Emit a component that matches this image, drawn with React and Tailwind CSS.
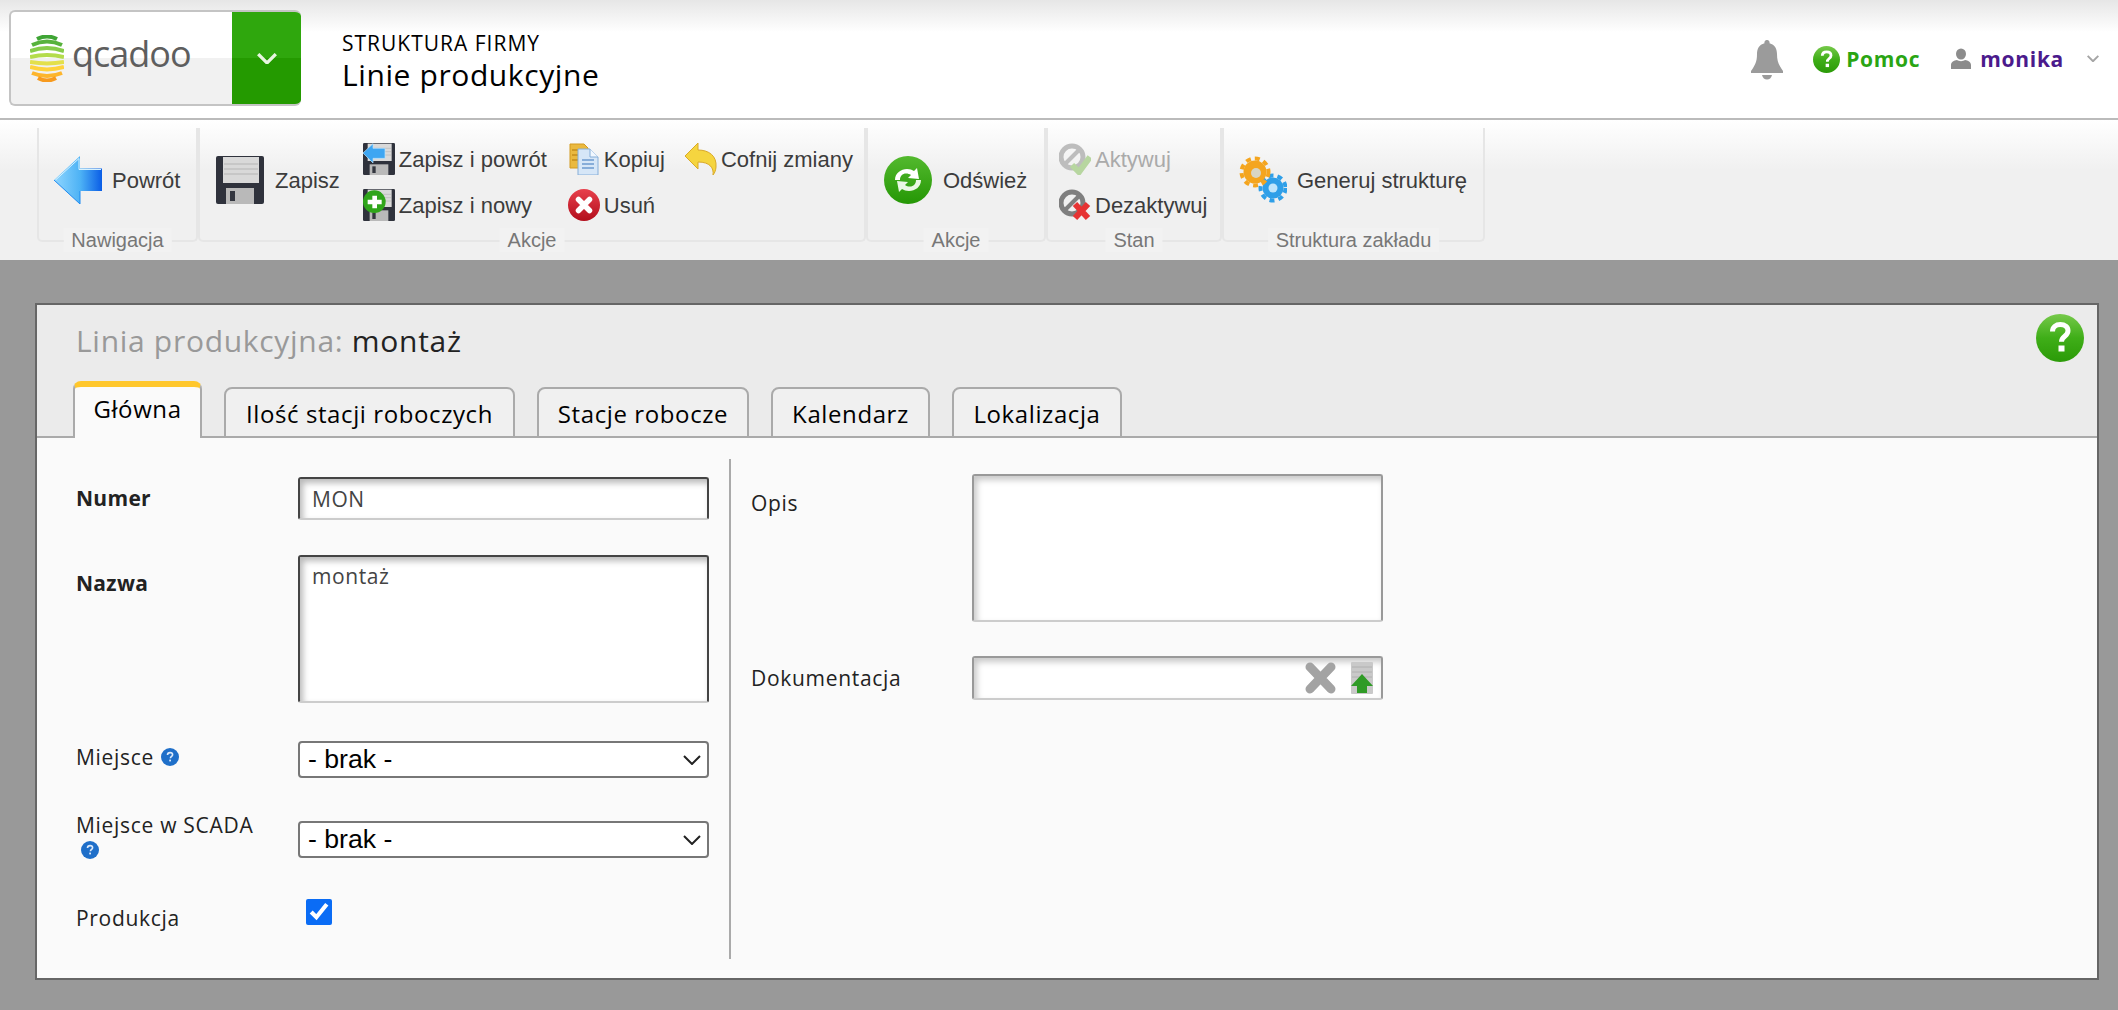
import { useId } from "react";

const ui_font = "font-['Open_Sans',sans-serif]";
const tool_font = "font-['Liberation_Sans',sans-serif]";

function GreenHelp({ size }) {
  const id = useId();
  return (
    <svg width={size} height={size} viewBox="0 0 48 48" className="shrink-0">
      <defs>
        <linearGradient id={id} x1="0" y1="0" x2="0" y2="1">
          <stop offset="0" stopColor="#76c94a" />
          <stop offset="0.5" stopColor="#3fae18" />
          <stop offset="1" stopColor="#2b9a08" />
        </linearGradient>
      </defs>
      <circle cx="24" cy="24" r="24" fill={`url(#${id})`} />
      <path d="M16.500 17.500c0-4.500 3.400-7 7.800-7 4.600 0 7.700 2.500 7.700 6.300 0 5.700-6.500 5.200-6.500 11" fill="none" stroke="#fff" strokeWidth="5" />
      <rect x="22.500" y="31.500" width="6" height="6" fill="#fff" />
    </svg>
  );
}

function BlueHelp() {
  return (
    <svg width="18" height="18" viewBox="0 0 18 18" className="shrink-0">
      <circle cx="9" cy="9" r="9" fill="#1f6fc9" />
      <path d="M6.500 7c0-1.500 1.100-2.400 2.600-2.400s2.500.9 2.500 2.100c0 1.800-2.200 1.700-2.200 3.600" fill="none" stroke="#dbe9fa" strokeWidth="1.600" />
      <rect x="8.200" y="11.600" width="1.800" height="1.800" fill="#dbe9fa" />
    </svg>
  );
}

function Logo() {
  return (
    <svg width="34" height="47" viewBox="0 0 34 47" className="shrink-0 blur-[0.5px]">
      <g fill="none" strokeWidth="4">
        <path d="M7 4Q17-1 27 4" stroke="#3fa535" />
        <path d="M2 10Q17 3 32 10" stroke="#57b23c" />
        <path d="M0 16Q17 10 34 16" stroke="#86cc4a" />
        <path d="M0 22Q17 18 34 22" stroke="#b4dc4c" />
        <path d="M0 27Q17 30 34 27" stroke="#e3e04b" />
        <path d="M0 32Q17 37 34 32" stroke="#ffd23c" />
        <path d="M2 38Q17 44 32 38" stroke="#fdb52c" />
        <path d="M8 43Q17 48 26 43" stroke="#f79a1e" />
      </g>
    </svg>
  );
}

function Bell() {
  return (
    <svg width="32" height="40" viewBox="0 0 32 40" className="shrink-0">
      <path d="M16 0a2.500 2.500 0 0 1 2.500 3.200C24 4.500 26 9 26 14c0 8 2 11 6 17v2H0v-2c4-6 6-9 6-17 0-5 2-9.500 7.500-10.800A2.500 2.500 0 0 1 16 0z" fill="#9b9b9b" />
      <path d="M11 35h10c-.8 3-2.500 4.500-5 4.500S11.800 38 11 35z" fill="#9b9b9b" />
    </svg>
  );
}

function UserIcon() {
  return (
    <svg width="20" height="21" viewBox="0 0 20 21" className="shrink-0">
      <ellipse cx="10" cy="6" rx="5" ry="5.500" fill="#8c8c8c" />
      <path d="M0 21v-4c0-3 3-4.500 6-5 2 1.500 6 1.500 8 0 3 .5 6 2 6 5v4z" fill="#8c8c8c" />
    </svg>
  );
}

function ArrowBig() {
  const id = useId();
  return (
    <svg width="48" height="48" viewBox="0 0 48 48" className="shrink-0">
      <defs>
        <linearGradient id={id} x1="0" y1="0" x2="1" y2="0">
          <stop offset="0" stopColor="#8fd6ff" />
          <stop offset="0.55" stopColor="#4db2f5" />
          <stop offset="1" stopColor="#0a5de6" />
        </linearGradient>
      </defs>
      <path d="M0 24 26 0v12.500h22V35H26v13z" fill={`url(#${id})`} />
      <path d="M1.500 24 25 2.500v11h22" fill="none" stroke="#d8f2ff" strokeWidth="1" />
      <path d="M0 24 26 48V35" fill="none" stroke="#1f8af0" strokeWidth="1" />
    </svg>
  );
}

function Floppy({ size = 48, overlay }) {
  return (
    <svg width={size} height={size} viewBox="0 0 48 48" className="shrink-0">
      <path d="M2 0h44a2 2 0 0 1 2 2v44a2 2 0 0 1-2 2H2a2 2 0 0 1-2-2V2a2 2 0 0 1 2-2z" fill="#2f323c" />
      <rect x="7" y="1" width="36" height="26" fill="#d9d9d9" />
      <path d="M8 8h34M8 13h34M8 18h34" stroke="#b5b5b5" strokeWidth="1" />
      <rect x="10" y="32" width="28" height="16" fill="#b9b9b9" />
      <rect x="14" y="35" width="5" height="10" fill="#33363f" />
      {overlay === "back" && (
        <path d="M0 15 15 1v7h18v15H15v7z" fill="#3ea6f2" stroke="#b8e4ff" strokeWidth="1" />
      )}
      {overlay === "new" && (
        <g>
          <circle cx="17" cy="19" r="17" fill="#2fa51a" />
          <path d="M14 10h7v6h7v7h-7v6h-7v-6H7v-7h7z" fill="#fff" />
        </g>
      )}
    </svg>
  );
}

function CopyIcon() {
  return (
    <svg width="32" height="32" viewBox="0 0 32 32" className="shrink-0">
      <path d="M2 1h14l4 4v20H2z" fill="#eab93f" stroke="#d39a20" strokeWidth="1" />
      <path d="M4 7h8M4 12h8M4 17h6" stroke="#c58d1c" strokeWidth="1.500" />
      <path d="M10 6h12l8 8v18H10z" fill="#d6e6f7" stroke="#86aed8" strokeWidth="1" />
      <path d="M22 6v8h8" fill="#f2f8ff" stroke="#86aed8" strokeWidth="1" />
      <path d="M14 17h12M14 21h12M14 25h12" stroke="#6e9bd0" strokeWidth="1.500" />
    </svg>
  );
}

function UndoIcon() {
  return (
    <svg width="32" height="32" viewBox="0 0 32 32" className="shrink-0">
      <path d="M0 13 13 0v7c11 0 19 6 18 17-.2 3-1.200 6-3 8 1-7-3-13-15-13v7z" fill="#f5d53f" stroke="#d9a92a" strokeWidth="1" />
    </svg>
  );
}

function DeleteIcon() {
  const id = useId();
  return (
    <svg width="32" height="32" viewBox="0 0 32 32" className="shrink-0">
      <defs>
        <linearGradient id={id} x1="0" y1="0" x2="0" y2="1">
          <stop offset="0" stopColor="#e8404c" />
          <stop offset="1" stopColor="#b20d1b" />
        </linearGradient>
      </defs>
      <circle cx="16" cy="16" r="16" fill={`url(#${id})`} />
      <path d="M10.500 10.500l11 11M21.500 10.500l-11 11" stroke="#fff" strokeWidth="5.500" strokeLinecap="round" />
    </svg>
  );
}

function RefreshIcon() {
  const id = useId();
  return (
    <svg width="48" height="48" viewBox="0 0 48 48" className="shrink-0">
      <defs>
        <linearGradient id={id} x1="0" y1="0" x2="0" y2="1">
          <stop offset="0" stopColor="#53b92e" />
          <stop offset="1" stopColor="#259705" />
        </linearGradient>
      </defs>
      <circle cx="24" cy="24" r="24" fill={`url(#${id})`} />
      <path d="M11 24c0-7 6-11 12-11 3 0 5 .8 7 2l3-3 2 11-11-1 3-3c-1.500-1-3-1.500-5-1.500-3.500 0-6 2.500-6 6.500z" fill="#fff" />
      <path d="M37 24c0 7-6 11-12 11-3 0-5-.8-7-2l-3 3-2-11 11 1-3 3c1.500 1 3 1.500 5 1.500 3.500 0 6-2.500 6-6.500z" fill="#eaf7e4" />
    </svg>
  );
}

function ActivateIcon() {
  return (
    <svg width="32" height="32" viewBox="0 0 32 32" className="shrink-0 blur-[0.4px]">
      <circle cx="13" cy="14" r="11" fill="none" stroke="#bdbdbd" strokeWidth="5" />
      <path d="M5 22 21 6" stroke="#bdbdbd" strokeWidth="4" />
      <path d="M13 22l7 7 11-15" fill="none" stroke="#b7d6a0" strokeWidth="6" />
    </svg>
  );
}

function DeactivateIcon() {
  return (
    <svg width="32" height="32" viewBox="0 0 32 32" className="shrink-0">
      <circle cx="13" cy="14" r="11" fill="none" stroke="#7f7f7f" strokeWidth="5" />
      <path d="M5 22 21 6" stroke="#7f7f7f" strokeWidth="4" />
      <path d="M16 15l13 14M29 15 16 29" stroke="#e63333" strokeWidth="6" />
    </svg>
  );
}

function GearsIcon() {
  return (
    <svg width="48" height="48" viewBox="0 0 48 48" className="shrink-0 blur-[0.5px]">
      <circle cx="34" cy="32" r="10.500" fill="#2f9fe8" />
      <circle cx="34" cy="32" r="12.500" fill="none" stroke="#2f9fe8" strokeWidth="4" strokeDasharray="5 4" />
      <circle cx="34" cy="32" r="4.500" fill="#bfe5fb" />
      <circle cx="16" cy="16" r="11.500" fill="#f4a51f" />
      <circle cx="16" cy="16" r="13.500" fill="none" stroke="#f4a51f" strokeWidth="4" strokeDasharray="5 4" />
      <circle cx="17" cy="17" r="5" fill="#d8d5c4" />
    </svg>
  );
}

function ClearIcon() {
  return (
    <svg width="33" height="32" viewBox="0 0 33 32" className="shrink-0">
      <path d="M6 5l21 22M27 5 6 27" stroke="#a3a3a3" strokeWidth="9" strokeLinecap="round" />
    </svg>
  );
}

function UploadIcon() {
  return (
    <svg width="24" height="32" viewBox="0 0 24 32" className="shrink-0">
      <rect x="1" y="0" width="22" height="32" rx="1" fill="#c9c9c9" />
      <path d="M2 5h20M2 10h20M2 15h20" stroke="#b0b0b0" strokeWidth="1" />
      <path d="M12 12 23 24h-6v7H7v-7H1z" fill="#2f9b26" />
    </svg>
  );
}

function SmallChevron({ className, color = "#222", width = 18, height = 10, stroke = 2 }) {
  return (
    <svg width={width} height={height} viewBox="0 0 18 10" className={className}>
      <path d="M1 1l8 8 8-8" fill="none" stroke={color} strokeWidth={stroke} />
    </svg>
  );
}

function BigButton({ icon, label, iconGap = "ml-[10px]" }) {
  return (
    <div className="flex items-center mt-[13px]">
      {icon}
      <span className={`${iconGap} text-[22px] text-[#3c3c3c] whitespace-nowrap`}>{label}</span>
    </div>
  );
}

function SmallButton({ icon, label, disabled }) {
  return (
    <div className="flex items-center h-[32px] gap-[4px]">
      {icon}
      <span className={`text-[22px] whitespace-nowrap ${disabled ? "text-[#aaaaaa]" : "text-[#3c3c3c]"}`}>{label}</span>
    </div>
  );
}

function ToolGroup({ title, className, children }) {
  return (
    <div className={`relative h-[114px] pt-[15px] flex items-start border-l-2 border-b-2 border-r-2 border-[#e6e6e6] rounded-b-[5px] ${className}`}>
      {children}
      <span className="absolute left-1/2 -translate-x-1/2 bottom-[-12px] px-[8px] bg-[#f2f2f2] text-[20px] leading-[24px] text-[#777777] whitespace-nowrap">{title}</span>
    </div>
  );
}

function Header() {
  return (
    <header className={`h-[120px] shrink-0 flex border-b-2 border-[#bbbbbb] bg-[linear-gradient(#e6e6e6,#ffffff_32px)] ${ui_font}`}>
      <div className="ml-[9px] mt-[10px] w-[292px] h-[96px] flex rounded-[6px] overflow-hidden border-2 border-r-0 border-[#c4c4c4] bg-[linear-gradient(#ffffff_50%,#f1f1f1_50%)]">
        <div className="w-[221px] flex items-center pl-[19px] gap-[8px]">
          <Logo />
          <span className="text-[36px] leading-none text-[#5e5e5e] tracking-[-1px] pb-[8px]">qcadoo</span>
        </div>
        <div className="flex-1 -my-[2px] flex items-center justify-center bg-[linear-gradient(#2fa70d_50%,#249a00_50%)]">
          <SmallChevron color="#e8f5e0" width={22} height={11} stroke={3} />
        </div>
      </div>
      <div className="ml-[41px] mt-[30px] text-black">
        <div className="text-[21px] leading-[26px] tracking-[1px]">STRUKTURA FIRMY</div>
        <div className="text-[30px] leading-[38px] tracking-[0.6px]">Linie produkcyjne</div>
      </div>
      <div className="ml-auto mt-[40px] flex items-start">
        <Bell />
        <div className="ml-[30px] mt-[6px]"><GreenHelp size={27} /></div>
        <span className="ml-[6px] mt-[5px] text-[21px] leading-[28px] font-bold tracking-[0.7px] text-[#2aa513]">Pomoc</span>
        <div className="ml-[31px] mt-[8px]"><UserIcon /></div>
        <span className="ml-[9px] mt-[5px] text-[21px] leading-[28px] font-bold tracking-[0.7px] text-[#4b1a8c]">monika</span>
        <SmallChevron className="ml-[23px] mt-[15px] mr-[19px]" color="#a5a5a5" width={12} height={7} stroke={3} />
      </div>
    </header>
  );
}

function Toolbar() {
  return (
    <div className={`h-[140px] shrink-0 pl-[37px] pt-[8px] flex items-start bg-[linear-gradient(#ffffff,#f0f0f0_50px)] ${tool_font}`}>
      <ToolGroup title="Nawigacja" className="w-[161px] pl-[15px]">
        <BigButton icon={<ArrowBig />} label="Powrót" />
      </ToolGroup>
      <ToolGroup title="Akcje" className="w-[668px] pl-[16px]">
        <BigButton icon={<Floppy />} label="Zapisz" iconGap="ml-[11px]" />
        <div className="ml-[23px] flex flex-col gap-[14px]">
          <SmallButton icon={<Floppy size={32} overlay="back" />} label="Zapisz i powrót" />
          <SmallButton icon={<Floppy size={32} overlay="new" />} label="Zapisz i nowy" />
        </div>
        <div className="ml-[21px] flex flex-col gap-[14px]">
          <SmallButton icon={<CopyIcon />} label="Kopiuj" />
          <SmallButton icon={<DeleteIcon />} label="Usuń" />
        </div>
        <div className="ml-[20px]">
          <SmallButton icon={<UndoIcon />} label="Cofnij zmiany" />
        </div>
      </ToolGroup>
      <ToolGroup title="Akcje" className="w-[180px] pl-[16px]">
        <BigButton icon={<RefreshIcon />} label="Odśwież" iconGap="ml-[11px]" />
      </ToolGroup>
      <ToolGroup title="Stan" className="w-[176px] pl-[11px]">
        <div className="flex flex-col gap-[14px]">
          <SmallButton icon={<ActivateIcon />} label="Aktywuj" disabled />
          <SmallButton icon={<DeactivateIcon />} label="Dezaktywuj" />
        </div>
      </ToolGroup>
      <ToolGroup title="Struktura zakładu" className="w-[263px] pl-[15px]">
        <BigButton icon={<GearsIcon />} label="Generuj strukturę" />
      </ToolGroup>
    </div>
  );
}

const tabs = [
  { name: "Ilość stacji roboczych", width: "w-[291px]" },
  { name: "Stacje robocze", width: "w-[212px]" },
  { name: "Kalendarz", width: "w-[159px]" },
  { name: "Lokalizacja", width: "w-[170px]" },
];

function PanelHeader() {
  return (
    <div className="relative h-[133px] shrink-0 bg-[#ebebeb] border-b-2 border-[#aaaaaa] flex flex-col">
      <div className="pl-[39px] pt-[16px] text-[30px] leading-[40px] tracking-[0.7px]">
        <span className="text-[#999999]">Linia produkcyjna: </span>
        <span className="text-[#222222]">montaż</span>
      </div>
      <div className="absolute right-[13px] top-[9px]"><GreenHelp size={48} /></div>
      <div className="mt-auto ml-[36px] flex items-end gap-[22px] -mb-[2px]">
        <div className="w-[129px] h-[57px] flex justify-center pt-[6px] rounded-t-[8px] border-t-[6px] border-x-2 border-t-[#ffc72c] border-x-[#aaaaaa] bg-[#fafafa] text-[24px] leading-[32px] tracking-[0.6px] text-black">
          Główna
        </div>
        {tabs.map((tab) => (
          <div key={tab.name} className={`${tab.width} h-[51px] flex justify-center pt-[9px] rounded-t-[8px] border-t-2 border-x-2 border-[#aaaaaa] bg-[#f0f0f0] border-b-2 border-b-[#aaaaaa] text-[24px] leading-[32px] tracking-[0.6px] text-black whitespace-nowrap`}>
            {tab.name}
          </div>
        ))}
      </div>
    </div>
  );
}

const dark_field = "border-2 border-[#444444] border-b-[#cccccc] rounded-[3px] bg-white shadow-[inset_3px_4px_6px_rgba(0,0,0,0.28)] outline-none";
const light_field = "border-2 border-[#999999] border-b-[#cccccc] rounded-[3px] bg-white shadow-[inset_3px_4px_6px_rgba(0,0,0,0.22)] outline-none";

function Select() {
  return (
    <div className="relative w-[411px] h-[37px]">
      <select defaultValue="" className="appearance-none w-full h-full pl-[8px] rounded-[4px] border-2 border-[#777777] bg-white text-[26.67px] leading-none text-black font-['Liberation_Sans',sans-serif] outline-none">
        <option value="">- brak -</option>
      </select>
      <SmallChevron className="absolute right-[8px] top-[14px] pointer-events-none" />
    </div>
  );
}

function Label({ className, bold, children }) {
  return (
    <div className={`w-[222px] shrink-0 text-[21px] leading-[28px] text-[#222222] ${bold ? "font-bold tracking-[0.3px]" : "tracking-[0.7px]"} ${className}`}>
      {children}
    </div>
  );
}

function Form() {
  return (
    <div className={`flex pl-[39px] pt-[21px] ${ui_font}`}>
      <div className="w-[655px] h-[500px] pt-[18px] border-r-2 border-[#aaaaaa] flex flex-col">
        <div className="flex">
          <Label bold className="mt-[7px]">Numer</Label>
          <input readOnly value="MON" className={`w-[411px] h-[43px] pl-[12px] text-[21px] tracking-[0.5px] text-[#444444] ${dark_field}`} />
        </div>
        <div className="flex mt-[35px]">
          <Label bold className="mt-[14px]">Nazwa</Label>
          <textarea readOnly value="montaż" className={`w-[411px] h-[148px] pl-[12px] pt-[5px] text-[21px] leading-[28px] tracking-[0.6px] text-[#444444] resize-none ${dark_field}`} />
        </div>
        <div className="flex mt-[38px]">
          <Label className="flex items-center gap-[7px] h-[32px]">Miejsce <BlueHelp /></Label>
          <Select />
        </div>
        <div className="flex mt-[43px]">
          <Label className="-mt-[10px]">
            Miejsce w SCADA
            <div className="ml-[5px] mt-[2px]"><BlueHelp /></div>
          </Label>
          <Select />
        </div>
        <div className="flex mt-[40px]">
          <Label className="mt-[5px]">Produkcja</Label>
          <input type="checkbox" readOnly checked className="ml-[8px] w-[26px] h-[26px] m-0 accent-[#0a6cf5]" />
        </div>
      </div>
      <div className="pl-[19px] pt-[15px] flex flex-col">
        <div className="flex">
          <Label className="ml-[1px] mt-[15px] !w-[221px]">Opis</Label>
          <textarea readOnly value="" className={`w-[411px] h-[148px] resize-none ${light_field}`} />
        </div>
        <div className="flex mt-[34px]">
          <Label className="ml-[1px] mt-[8px] !w-[221px]">Dokumentacja</Label>
          <div className={`relative w-[411px] h-[44px] ${light_field}`}>
            <div className="absolute right-[7px] top-[4px] flex items-center gap-[13px]">
              <ClearIcon />
              <UploadIcon />
            </div>
          </div>
        </div>
      </div>
    </div>
  );
}

export default function App() {
  return (
    <div className="h-[1010px] w-[2118px] overflow-hidden flex flex-col bg-[#999999]">
      <Header />
      <Toolbar />
      <main className={`ml-[35px] mt-[43px] w-[2064px] h-[677px] shrink-0 border-2 border-[#666666] bg-[#fafafa] flex flex-col ${ui_font}`}>
        <PanelHeader />
        <Form />
      </main>
    </div>
  );
}
